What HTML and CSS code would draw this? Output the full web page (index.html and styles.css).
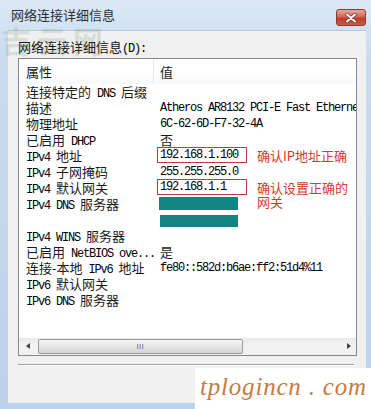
FILE: index.html
```html
<!DOCTYPE html>
<html lang="zh-CN">
<head>
    <meta charset="UTF-8">
    <meta name="viewport" content="width=device-width, initial-scale=1.0">
    <title>网络连接详细信息</title>
    <link rel="stylesheet" href="styles.css">
</head>
<body>
    <div class="window">
        <div class="titlebar">
            <span class="title">网络连接详细信息</span>
            <button class="close-btn" aria-label="关闭">
                <svg width="14" height="10" viewBox="0 0 14 10">
                    <path d="M3 1.5 L11 8.5 M11 1.5 L3 8.5" stroke="#7a2a20" stroke-width="3.4" stroke-linecap="round"/>
                    <path d="M3 1.5 L11 8.5 M11 1.5 L3 8.5" stroke="#fff" stroke-width="2" stroke-linecap="round"/>
                </svg>
            </button>
        </div>

        <div class="client">
            <div class="label">网络连接详细信息<span class="m">(D):</span></div>

            <div class="listview">
                <div class="lv-header">
                    <span class="prop">属性</span>
                    <span class="col-sep"></span>
                    <span class="val">值</span>
                </div>

                <div class="lv-rows">
                    <div class="row"><span class="prop">连接特定的<span class="m"> DNS </span>后缀</span><span class="val"></span></div>
                    <div class="row"><span class="prop">描述</span><span class="val m">Atheros AR8132 PCI-E Fast Ethernet Controller</span></div>
                    <div class="row"><span class="prop">物理地址</span><span class="val m">6C-62-6D-F7-32-4A</span></div>
                    <div class="row"><span class="prop">已启用<span class="m"> DHCP</span></span><span class="val">否</span></div>
                    <div class="row">
                        <span class="prop"><span class="m">IPv4 </span>地址</span>
                        <span class="val">
                            <span class="boxed m">192.168.1.100</span>
                            <span class="note">确认IP地址正确</span>
                        </span>
                    </div>
                    <div class="row"><span class="prop"><span class="m">IPv4 </span>子网掩码</span><span class="val m">255.255.255.0</span></div>
                    <div class="row">
                        <span class="prop"><span class="m">IPv4 </span>默认网关</span>
                        <span class="val">
                            <span class="boxed m">192.168.1.1</span>
                            <span class="note">确认设置正确的<br>网关</span>
                        </span>
                    </div>
                    <div class="row"><span class="prop"><span class="m">IPv4 DNS </span>服务器</span><span class="val"><span class="masked"></span></span></div>
                    <div class="row"><span class="prop"></span><span class="val"><span class="masked second"></span></span></div>
                    <div class="row"><span class="prop"><span class="m">IPv4 WINS </span>服务器</span><span class="val"></span></div>
                    <div class="row"><span class="prop">已启用<span class="m"> NetBIOS ove...</span></span><span class="val">是</span></div>
                    <div class="row"><span class="prop">连接-本地<span class="m"> IPv6 </span>地址</span><span class="val m">fe80::582d:b6ae:ff2:51d4%11</span></div>
                    <div class="row"><span class="prop"><span class="m">IPv6 </span>默认网关</span><span class="val"></span></div>
                    <div class="row"><span class="prop"><span class="m">IPv6 DNS </span>服务器</span><span class="val"></span></div>
                </div>

                <div class="hscroll">
                    <span class="arrow left"></span>
                    <span class="thumb"><span class="grip">III</span></span>
                    <span class="track"></span>
                    <span class="arrow right"></span>
                </div>
            </div>

            <div class="separator"></div>
        </div>

        <!-- watermarks laid over the screenshot -->
        <div class="logo-mark">吉云网</div>
        <div class="site-mark">tplogincn . com</div>
    </div>
</body>
</html>
```

FILE: styles.css
```css
body {
    margin: 0;
    width: 371px;
    height: 409px;
    overflow: hidden;
    font-family: "Noto Sans CJK SC", "Liberation Sans", sans-serif;
    font-size: 13px;
    color: #1a1a1a;
}
.m {
    font-family: "Liberation Mono", monospace;
    font-size: 12px;
    letter-spacing: -1.2px;
    color: #000;
}
.window {
    position: relative;
    height: 409px;
    box-sizing: border-box;
    display: flex;
    flex-direction: column;
    padding: 0 5px 6px 8px;
    background: linear-gradient(#dce8f5, #c9dbef 60px, #bcd2ea);
}
.titlebar {
    height: 30px;
    display: flex;
    align-items: flex-start;
    justify-content: space-between;
}
.title {
    margin: 7px 0 0 3px;
    line-height: 16px;
    color: #2a2f35;
}
.close-btn {
    margin-top: 9px;
    width: 30px;
    height: 17px;
    padding: 0;
    border: 1px solid #8a3a30;
    border-radius: 3px;
    background: linear-gradient(#e6a99c, #d06a58 45%, #bf3e2a 55%, #c95a44);
    display: flex;
    align-items: center;
    justify-content: center;
}
.client {
    flex: 1;
    background: #f0f0f0;
    padding: 8px 9px 0 10px;
    border-top: 1px solid #b4c6da;
}
.label {
    line-height: 16px;
    margin-bottom: 1px;
    color: #111;
}
.listview {
    height: 298px;
    box-sizing: border-box;
    border: 1px solid #828790;
    background: #fff;
    display: flex;
    flex-direction: column;
    overflow: hidden;
}
.lv-header {
    height: 25px;
    display: flex;
    align-items: center;
    background: linear-gradient(#fff, #fff 60%, #f7f8fa);
    flex-shrink: 0;
}
.lv-header .prop {
    width: 127px;
}
.col-sep {
    width: 1px;
    height: 25px;
    background: #e5e7ea;
    margin-right: 6px;
}
.prop {
    width: 134px;
    padding-left: 7px;
    flex-shrink: 0;
    white-space: nowrap;
}
.lv-rows {
    flex: 1;
}
.row {
    display: flex;
    height: 16px;
    line-height: 16px;
}
.val {
    display: flex;
    align-items: flex-start;
    white-space: nowrap;
}
.boxed {
    width: 90px;
    height: 16px;
    box-sizing: border-box;
    margin: -1px 0 0 -3px;
    padding-left: 2px;
    border: 1px solid #c43a3a;
    line-height: 14px;
}
.note {
    margin-left: 10px;
    line-height: 14px;
    margin-top: 1px;
    color: #d23a2c;
}
.masked {
    display: block;
    width: 79px;
    height: 13px;
    margin: 1px 0 0 -1px;
    background: #138481;
}
.masked.second {
    margin: 3px 0 0 0;
    width: 78px;
    height: 12px;
}
.hscroll {
    height: 17px;
    display: flex;
    align-items: center;
    background: linear-gradient(#e8e8e8, #f3f3f3 40%, #f0f0f0);
    flex-shrink: 0;
}
.arrow {
    width: 17px;
    height: 17px;
    position: relative;
}
.arrow::after {
    content: "";
    position: absolute;
    top: 5px;
    border-top: 3px solid transparent;
    border-bottom: 3px solid transparent;
}
.arrow.left::after {
    left: 7px;
    border-right: 4px solid #404040;
}
.arrow.right::after {
    left: 8px;
    border-left: 4px solid #404040;
}
.thumb {
    width: 205px;
    height: 15px;
    margin-left: 2px;
    box-sizing: border-box;
    border: 1px solid #9a9a9a;
    border-radius: 2px;
    background: linear-gradient(#f6f6f6, #e6e6e6 50%, #d4d4d4);
    display: flex;
    align-items: center;
    justify-content: center;
}
.grip {
    font-family: "Liberation Sans", sans-serif;
    font-size: 7px;
    letter-spacing: 0.5px;
    color: #555;
    line-height: 1;
}
.track {
    flex: 1;
}
.separator {
    margin-top: 8px;
    width: 336px;
    height: 1px;
    background: #a0a0a0;
    border-bottom: 1px solid #fff;
}
.logo-mark {
    position: absolute;
    left: 1px;
    top: 24px;
    font-size: 30px;
    font-weight: bold;
    letter-spacing: 6px;
    line-height: 32px;
    color: rgba(110, 135, 110, 0.2);
}
.site-mark {
    position: absolute;
    right: 0;
    bottom: 0;
    width: 176px;
    height: 41px;
    box-sizing: border-box;
    padding: 4px 0 0 5px;
    background: #fff;
    font-family: "Liberation Serif", serif;
    font-style: italic;
    font-size: 25px;
    letter-spacing: 0.8px;
    line-height: 30px;
    color: #c97a42;
    white-space: nowrap;
}
```
